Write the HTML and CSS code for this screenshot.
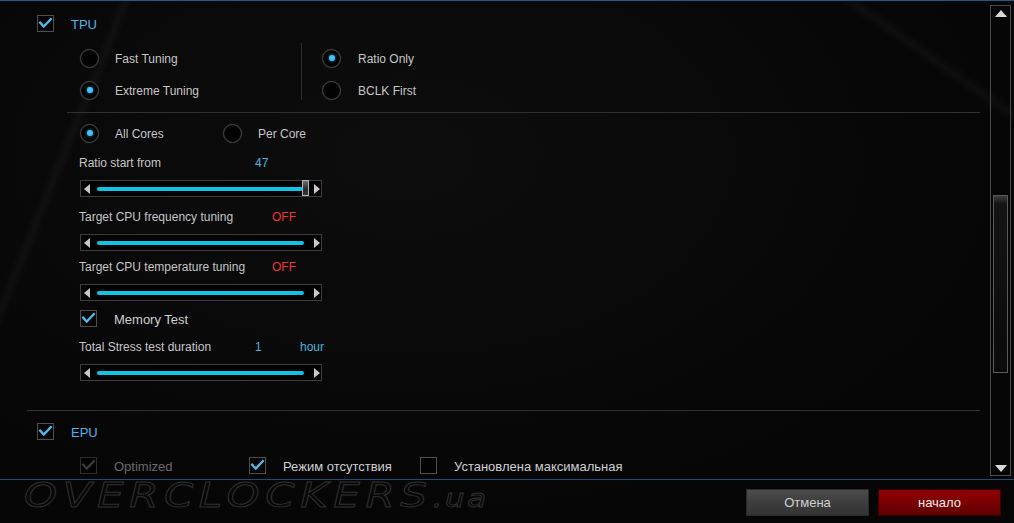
FILE: index.html
```html
<!DOCTYPE html>
<html lang="ru">
<head>
    <meta charset="UTF-8">
    <title>TPU / EPU</title>
    <link rel="stylesheet" href="styles.css">
</head>
<body>
    <div class="app">
        <div class="main">
            <div class="panel">
                <div class="section-head">
                    <span class="check on"><svg viewBox="0 0 17 17"><path d="M1.5 6.5 L6.5 12 L15.5 2.5"/></svg></span>
                    <span class="section-title">TPU</span>
                </div>

                <div class="modes">
                    <div class="mode-col">
                        <div class="radio-row"><span class="radio"></span><span class="txt">Fast Tuning</span></div>
                        <div class="radio-row"><span class="radio on"></span><span class="txt">Extreme Tuning</span></div>
                    </div>
                    <div class="mode-col right">
                        <div class="radio-row"><span class="radio on"></span><span class="txt">Ratio Only</span></div>
                        <div class="radio-row"><span class="radio"></span><span class="txt">BCLK First</span></div>
                    </div>
                </div>

                <div class="rule short"></div>

                <div class="cores">
                    <div class="radio-row core"><span class="radio on"></span><span class="txt">All Cores</span></div>
                    <div class="radio-row"><span class="radio"></span><span class="txt">Per Core</span></div>
                </div>

                <div class="field-label ratio">
                    <span class="name">Ratio start from</span>
                    <span class="value">47</span>
                </div>
                <div class="slider s-ratio">
                    <span class="arr left"></span>
                    <div class="track"><span class="fill"></span><span class="thumb"></span></div>
                    <span class="arr right"></span>
                </div>

                <div class="field-label freq">
                    <span class="name wide">Target CPU frequency tuning</span>
                    <span class="off">OFF</span>
                </div>
                <div class="slider s-freq">
                    <span class="arr left"></span>
                    <div class="track"><span class="fill"></span></div>
                    <span class="arr right"></span>
                </div>

                <div class="field-label temp">
                    <span class="name wide">Target CPU temperature tuning</span>
                    <span class="off">OFF</span>
                </div>
                <div class="slider s-temp">
                    <span class="arr left"></span>
                    <div class="track"><span class="fill"></span></div>
                    <span class="arr right"></span>
                </div>

                <div class="check-row memory">
                    <span class="check on"><svg viewBox="0 0 17 17"><path d="M1.5 6.5 L6.5 12 L15.5 2.5"/></svg></span>
                    <span class="txt">Memory Test</span>
                </div>

                <div class="field-label stress">
                    <span class="name">Total Stress test duration</span>
                    <span class="value short">1</span>
                    <span class="value">hour</span>
                </div>
                <div class="slider s-stress">
                    <span class="arr left"></span>
                    <div class="track"><span class="fill"></span></div>
                    <span class="arr right"></span>
                </div>

                <div class="rule long"></div>

                <div class="section-head epu">
                    <span class="check on"><svg viewBox="0 0 17 17"><path d="M1.5 6.5 L6.5 12 L15.5 2.5"/></svg></span>
                    <span class="section-title">EPU</span>
                </div>

                <div class="epu-opts">
                    <div class="check-row disabled opt-1">
                        <span class="check on"><svg viewBox="0 0 17 17"><path d="M1.5 6.5 L6.5 12 L15.5 2.5"/></svg></span>
                        <span class="txt">Optimized</span>
                    </div>
                    <div class="check-row opt-2">
                        <span class="check on"><svg viewBox="0 0 17 17"><path d="M1.5 6.5 L6.5 12 L15.5 2.5"/></svg></span>
                        <span class="txt">Режим отсутствия</span>
                    </div>
                    <div class="check-row">
                        <span class="check"></span>
                        <span class="txt">Установлена максимальная</span>
                    </div>
                </div>
            </div>

            <div class="scrollbar">
                <span class="sb-up"></span>
                <div class="sb-rail"><span class="sb-thumb"></span></div>
                <span class="sb-down"></span>
            </div>
        </div>

        <div class="footer">
            <div class="watermark">OVERCLOCKERS<small>.ua</small></div>
            <button class="btn cancel">Отмена</button>
            <button class="btn start">начало</button>
        </div>
    </div>
</body>
</html>
```

FILE: styles.css
```css
html, body {
    margin: 0;
    padding: 0;
}
body {
    width: 1014px;
    height: 523px;
    overflow: hidden;
    font-family: "Liberation Sans", Arial, sans-serif;
    font-size: 12px;
    color: #c6c6c6;
    background-color: #070707;
    background-image:
        linear-gradient(35deg, transparent 89.8%, rgba(255,255,255,0.03) 90.6%, transparent 91.5%),
        linear-gradient(112deg, transparent 9.6%, rgba(255,255,255,0.03) 10.3%, transparent 11%),
        radial-gradient(ellipse at 40% 30%, #0d0d0d 0%, #060606 70%);
}
.app {
    border-top: 1px solid #1f5c8c;
    height: 522px;
    display: flex;
    flex-direction: column;
}
.main {
    height: 478px;
    display: flex;
    overflow: hidden;
}
.panel {
    flex: 1;
    display: flex;
    flex-direction: column;
    align-items: flex-start;
}
.txt {
    padding-top: 2px;
}

/* checkboxes */
.check {
    width: 15px;
    height: 15px;
    border: 1px solid #4e4e4e;
    background: #030303;
    display: inline-block;
    flex: none;
}
.check svg {
    width: 15px;
    height: 15px;
    display: block;
}
.check path {
    fill: none;
    stroke: #4fbcef;
    stroke-width: 2.6;
}
.check-row {
    display: flex;
    align-items: center;
    gap: 17px;
    height: 17px;
    font-size: 13px;
    color: #cfcfcf;
}
.check-row.disabled {
    color: #6a6a6a;
}
.check-row.disabled .check {
    border-color: #2e2e2e;
}
.check-row.disabled path {
    stroke: #3a3a3a;
}

/* section headings */
.section-head {
    display: flex;
    align-items: center;
    gap: 17px;
    height: 17px;
    margin: 14px 0 0 37px;
}
.section-head.epu {
    margin-top: 12px;
}
.section-title {
    color: #4db6e8;
    font-size: 13px;
    padding-top: 2px;
}

/* radios */
.radio {
    width: 17px;
    height: 17px;
    border-radius: 50%;
    border: 1.5px solid #474747;
    background: radial-gradient(circle, #020202 55%, #161616 100%);
    box-shadow: 0 0 0 0.5px #1b1b1b;
    position: relative;
    flex: none;
}
.radio.on::after {
    content: "";
    position: absolute;
    left: 5.5px;
    top: 5.5px;
    width: 6px;
    height: 6px;
    border-radius: 50%;
    background: #4ac0f4;
    box-shadow: 0 0 3px #2aa0e0;
}
.radio-row {
    display: flex;
    align-items: center;
    gap: 16px;
    height: 20px;
}

.modes {
    display: flex;
    height: 57px;
    margin-top: 11px;
}
.mode-col {
    width: 221px;
    padding: 5px 0 0 80px;
    display: flex;
    flex-direction: column;
    gap: 12px;
    border-right: 1px solid #2f2f2f;
}
.mode-col.right {
    width: auto;
    padding-left: 20px;
    border-right: none;
}
.mode-col.right .radio-row {
    gap: 17px;
}

.rule {
    height: 1px;
    background: #303030;
    align-self: stretch;
    margin-right: 10px;
}
.rule.short {
    margin-top: 12px;
    margin-left: 67px;
}
.rule.long {
    margin-top: 29px;
    margin-left: 27px;
}

.cores {
    display: flex;
    margin: 10px 0 0 80px;
}
.cores .core {
    width: 143px;
}

/* labelled sliders */
.field-label {
    display: flex;
    height: 14px;
    line-height: 14px;
    margin-left: 79px;
}
.field-label .name {
    width: 176px;
}
.field-label .name.wide {
    width: 193px;
}
.field-label .value {
    color: #4db2de;
}
.field-label .value.short {
    width: 45px;
}
.field-label .off {
    color: #ee3430;
}
.field-label.ratio { margin-top: 13px; }
.field-label.freq { margin-top: 13px; }
.field-label.temp { margin-top: 9px; }
.field-label.stress { margin-top: 13px; }

.slider {
    height: 15px;
    border: 1px solid #3d3d3d;
    background: #030303;
    margin: 10px 0 0 80px;
    display: flex;
    align-items: center;
    padding: 0 1px 0 3px;
    width: 236px;
}
.arr {
    width: 0;
    height: 0;
    border-top: 5.5px solid transparent;
    border-bottom: 5.5px solid transparent;
    flex: none;
}
.arr.left {
    border-right: 6px solid #c9c9c9;
}
.arr.right {
    border-left: 6px solid #c9c9c9;
    margin-left: 10px;
}
.track {
    width: 207px;
    height: 4px;
    margin-left: 7px;
    position: relative;
}
.fill {
    display: block;
    height: 4px;
    border-radius: 2px;
    background: #10c2e6;
}
.s-ratio .fill {
    width: 206px;
}
.thumb {
    position: absolute;
    left: 205px;
    top: -7px;
    width: 5px;
    height: 14px;
    border: 1px solid #a8b4bc;
    background: linear-gradient(#6e6e6e, #2a2a2a 60%, #3a3a3a);
}

.check-row.memory {
    margin: 9px 0 0 80px;
}

/* EPU options */
.epu-opts {
    display: flex;
    margin: 17px 0 0 80px;
}
.opt-1 { width: 169px; }
.opt-2 { width: 171px; }

/* scrollbar */
.scrollbar {
    width: 19px;
    height: 469px;
    margin: 4px 3px 0 0;
    border: 1px solid #4b4b4b;
    display: flex;
    flex-direction: column;
    align-items: center;
}
.sb-up, .sb-down {
    width: 0;
    height: 0;
    border-left: 6px solid transparent;
    border-right: 6px solid transparent;
    flex: none;
}
.sb-up {
    border-bottom: 7px solid #d8d8d8;
    margin-top: 4px;
}
.sb-down {
    border-top: 7px solid #d8d8d8;
    margin-bottom: 3px;
}
.sb-rail {
    flex: 1;
    align-self: stretch;
    display: flex;
    flex-direction: column;
    align-items: center;
}
.sb-thumb {
    width: 13px;
    height: 176px;
    margin-top: 178px;
    border: 1px solid #5a5a5a;
    background: linear-gradient(#3e3e3e, #141414 8px, #0b0b0b);
}

/* footer */
.footer {
    flex: 1;
    border-top: 1px solid #1d4d72;
    position: relative;
    display: flex;
    justify-content: flex-end;
    align-items: flex-start;
    gap: 9px;
    padding: 9px 13px 0 0;
}
.watermark {
    position: absolute;
    left: 24px;
    top: -2px;
    font-family: "DejaVu Sans", sans-serif;
    font-size: 30px;
    line-height: 30px;
    font-style: italic;
    letter-spacing: 4px;
    color: transparent;
    -webkit-text-stroke: 0.8px #303030;
    transform: scale(1.4, 1.15);
    transform-origin: left top;
    white-space: nowrap;
    pointer-events: none;
}
.watermark small {
    font-size: 22px;
    letter-spacing: 2px;
}
.btn {
    width: 123px;
    height: 27px;
    font-family: "Liberation Sans", Arial, sans-serif;
    font-size: 13px;
    cursor: pointer;
    position: relative;
}
.btn.cancel {
    color: #cfcfcf;
    border: 1px solid #2a2a2a;
    background: linear-gradient(#4d4d4d, #3d3d3d 50%, #343434);
}
.btn.start {
    color: #ececec;
    border: 1px solid #3a0000;
    background: linear-gradient(#8e0000, #7a0000 50%, #5e0000);
}
```
